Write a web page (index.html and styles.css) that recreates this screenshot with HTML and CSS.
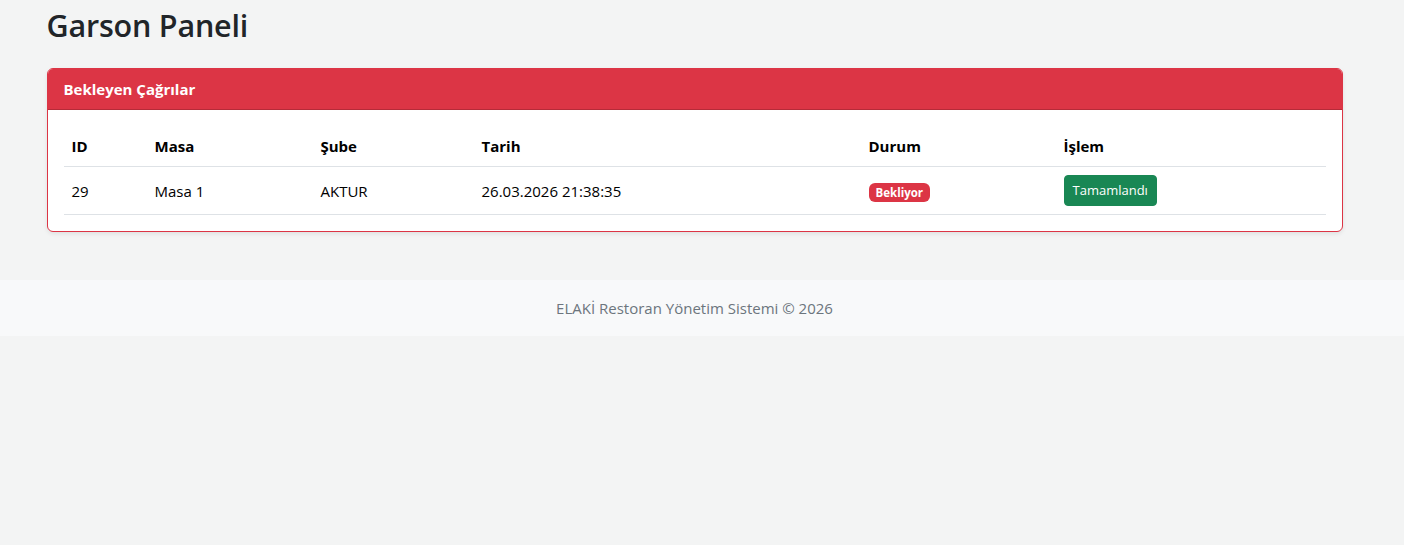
FILE: index.html
```html
<!DOCTYPE html>
<html lang="tr">
<head>
<meta charset="utf-8">
<title>Garson Paneli</title>
<link rel="stylesheet" href="styles.css">
</head>
<body>
<main class="page">
  <div class="container">
    <h2 class="title">Garson Paneli</h2>
    <section class="card">
      <div class="card-header">Bekleyen Çağrılar</div>
      <div class="card-body">
        <table class="table">
          <colgroup>
            <col class="c-id"><col class="c-masa"><col class="c-sube"><col class="c-tarih"><col class="c-durum"><col class="c-islem">
          </colgroup>
          <thead>
            <tr><th>ID</th><th>Masa</th><th>Şube</th><th>Tarih</th><th>Durum</th><th>İşlem</th></tr>
          </thead>
          <tbody>
            <tr>
              <td>29</td>
              <td>Masa 1</td>
              <td>AKTUR</td>
              <td>26.03.2026 21:38:35</td>
              <td><span class="badge">Bekliyor</span></td>
              <td><button class="btn">Tamamlandı</button></td>
            </tr>
          </tbody>
        </table>
      </div>
    </section>
  </div>
</main>
<footer class="footer">
  <div class="footer-inner">ELAKİ Restoran Yönetim Sistemi © 2026</div>
</footer>
</body>
</html>
```
FILE: styles.css
```css
html, body {
  margin: 0;
  padding: 0;
}
body {
  background: #f3f4f4;
  font-family: "Open Sans", "Noto Sans", sans-serif;
  font-size: 16px;
  line-height: 1.5;
  color: #212529;
}
.page {
  padding-right: 15px;
}
.container {
  max-width: 1296px;
  margin: 0 auto;
  padding: 6px 0 48px;
}
.title {
  margin: 0 0 24px;
  font-size: 30.5px;
  font-weight: 600;
  line-height: 38px;
  color: #212529;
  letter-spacing: -0.2px;
}
.card {
  background: #fff;
  border: 1px solid #dc3545;
  border-radius: 6px;
  box-shadow: 0 2px 4px rgba(0,0,0,0.08);
  overflow: hidden;
}
.card-header {
  background: #dc3545;
  color: #fff;
  font-weight: 700;
  padding: 8px 16px;
  font-size: 15px;
  line-height: 24px;
  border-bottom: 1px solid rgba(0,0,0,0.175);
}
.card-body {
  padding: 16px;
}
.table {
  width: 100%;
  border-collapse: collapse;
  color: #000;
  font-size: 15px;
}
.c-id { width: 83px; }
.c-masa { width: 166px; }
.c-sube { width: 161px; }
.c-tarih { width: 387px; }
.c-durum { width: 195px; }
.table th {
  text-align: left;
  font-weight: 700;
  padding: 8px;
  line-height: 24px;
  border-bottom: 1px solid #dee2e6;
}
.table td {
  padding: 8px;
  line-height: 24px;
  vertical-align: middle;
  border-bottom: 1px solid #dee2e6;
  height: 30px;
}
.badge {
  display: inline-block;
  background: #dc3545;
  color: #fff;
  font-size: 11.5px;
  font-weight: 700;
  line-height: 1;
  padding: 4px 7px;
  border-radius: 6px;
}
.btn {
  font-family: inherit;
  font-size: 13px;
  line-height: 21px;
  padding: 4px 8px;
  background: #198754;
  color: #fff;
  border: 1px solid #198754;
  border-radius: 4px;
}
.footer {
  background: #f8f9fa;
  padding: 16px 15px 16px 0;
  color: #6c757d;
  text-align: center;
  font-size: 15px;
  line-height: 24px;
}
```
